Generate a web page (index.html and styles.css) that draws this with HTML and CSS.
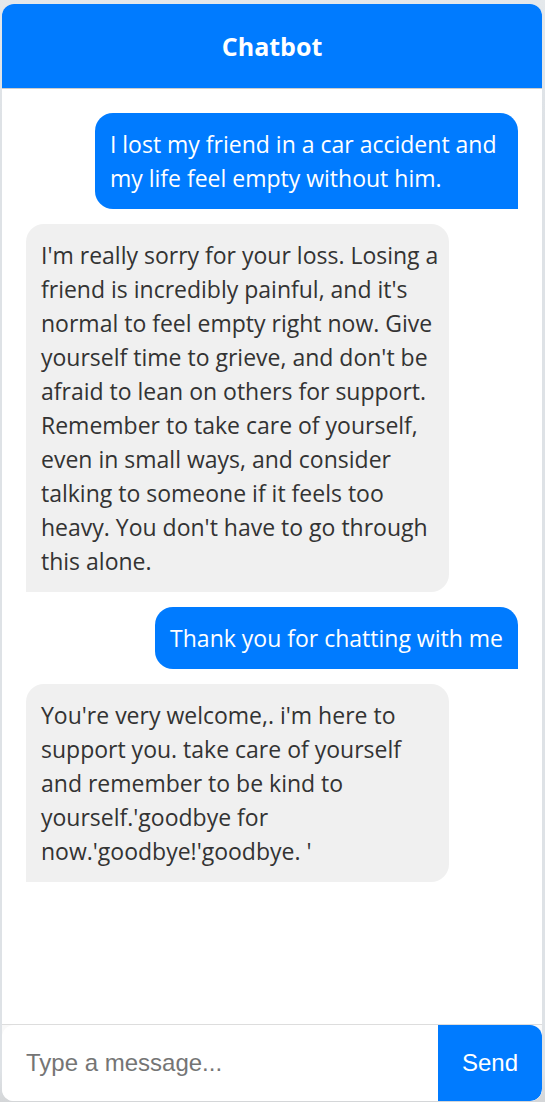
FILE: index.html
```html
<!DOCTYPE html>
<html lang="en">
<head>
<meta charset="utf-8">
<meta name="viewport" content="width=device-width, initial-scale=1">
<title>Chatbot</title>
<link rel="stylesheet" href="styles.css">
</head>
<body>
<main class="chat">
<header class="chat-header"><h1 class="chat-title">Chatbot</h1></header>
<section class="messages" aria-label="Conversation">
<p class="message user">I lost my friend in a car accident and my life feel empty without him.</p>
<p class="message bot">I'm really sorry for your loss. Losing a friend is incredibly painful, and it's normal to feel empty right now. Give yourself time to grieve, and don't be afraid to lean on others for support. Remember to take care of yourself, even in small ways, and consider talking to someone if it feels too heavy. You don't have to go through this alone.</p>
<p class="message user">Thank you for chatting with me</p>
<p class="message bot">You're very welcome,. i'm here to support you. take care of yourself and remember to be kind to yourself.'goodbye for now.'goodbye!'goodbye. '</p>
</section>
<form class="composer">
<input class="composer-input" type="text" placeholder="Type a message..." aria-label="Message">
<button class="composer-send" type="button">Send</button>
</form>
</main>
</body>
</html>
```
FILE: styles.css
```css
* { box-sizing: border-box; }
body {
  margin: 0;
  min-height: 100vh;
  display: flex;
  padding: 4px 3px 1px 2px;
  background: linear-gradient(#e4e8eb, #dee2e6 120px, #dee2e6 calc(100% - 30px), #d4d6d8);
  font-family: "Segoe UI", "Open Sans", "Noto Sans", sans-serif;
  font-size: 23px;
}
.chat {
  flex: 1;
  min-width: 0;
  display: flex;
  flex-direction: column;
  background: #fff;
  border-radius: 12px;
  overflow: hidden;
}
.chat-header {
  padding: 24px;
  background: #007bff;
  color: #fff;
  text-align: center;
  border-bottom: 1px solid #ccc;
}
.chat-title { margin: 0; font-size: 25px; line-height: 36px; font-weight: 700; }
.messages {
  flex: 1;
  display: flex;
  flex-direction: column;
  gap: 15px;
  padding: 24px;
}
.message {
  margin: 0;
  padding: 14px 15px;
  max-width: 86%;
  line-height: 34px;
  border-radius: 18px;
}
.user {
  align-self: flex-end;
  background: #007bff;
  color: #fff;
  border-bottom-right-radius: 0;
}
.bot {
  align-self: flex-start;
  padding-right: 10px;
  background: #f0f0f0;
  color: #333;
  border-bottom-left-radius: 0;
}
.composer { display: flex; border-top: 1px solid #ddd; background: #f9f9f9; }
.composer-input, .composer-send {
  border: 0;
  padding: 24px;
  font-family: "Liberation Sans", Arial, sans-serif;
  font-size: 24px;
  line-height: 28px;
}
.composer-input {
  flex: 1;
  min-width: 0;
  outline: 0;
  background: #fff;
  color: #333;
  border-radius: 12px 0 0 12px;
}
.composer-input::placeholder { color: #757575; opacity: 1; }
.composer-send {
  background: #007bff;
  color: #fff;
  border-radius: 0 12px 12px 0;
  cursor: pointer;
}
```
